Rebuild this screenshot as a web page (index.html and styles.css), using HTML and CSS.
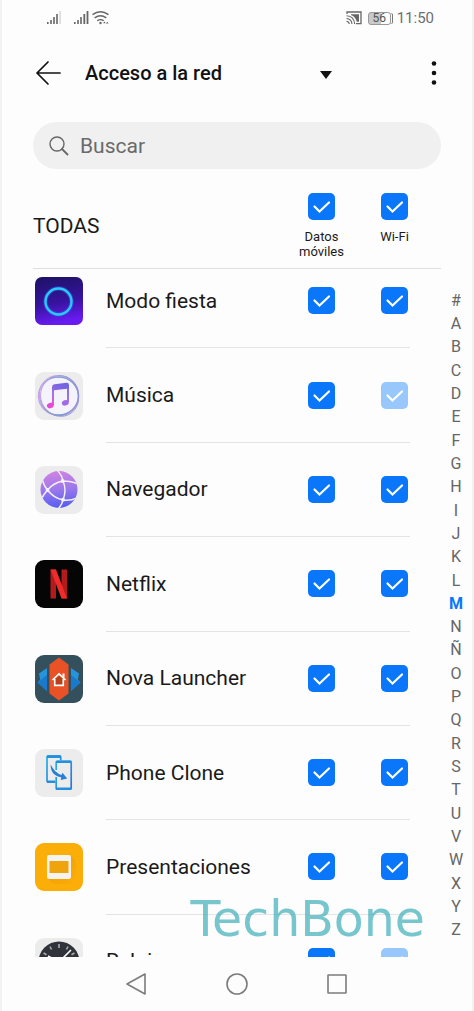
FILE: index.html
```html
<!DOCTYPE html>
<html lang="es">
<head>
<meta charset="utf-8">
<meta name="viewport" content="width=device-width, initial-scale=1">
<title>Acceso a la red</title>
<link rel="stylesheet" href="styles.css">
</head>
<body>
<div class="app">
  <div class="status">
    <div class="status-left">
      <svg width="15" height="14" viewBox="0 0 15 14" fill="#666"><rect x="0" y="11" width="1.6" height="2"/><rect x="3.2" y="9" width="1.6" height="4"/><rect x="6.2" y="6" width="1.6" height="7"/><rect x="9.2" y="3" width="1.6" height="10"/><rect x="12.4" y="0" width="1.4" height="13" fill="#d5d5d5"/></svg>
      <svg width="36" height="14" viewBox="0 0 36 14" fill="#666"><rect x="0" y="11" width="1.6" height="2"/><rect x="3.2" y="9" width="1.6" height="4"/><rect x="6.2" y="6" width="1.6" height="7"/><rect x="9.4" y="3" width="1.8" height="10"/><rect x="12.6" y="0" width="1.8" height="13"/><g fill="none" stroke="#666" stroke-width="1.4"><path d="M18.5 3.6Q26.5-2 34.5 3.6M20.7 6.8q5.8-4 11.6 0M23.2 9.8q3.3-2.4 6.6 0"/></g><circle cx="26.5" cy="12" r="1.2"/><path d="M29 12.2l1.6-1.6 1 1.6zM32 12.6l2.6-.2-1.3-1.6z"/></svg>
    </div>
    <div class="status-right">
      <svg width="16" height="14" viewBox="0 0 16 14"><path d="M1 3V1h14v11.600H10" fill="none" stroke="#666" stroke-width="1.300"/><path d="M5 3.300h8v7.500h-2.200Q9.500 5.500 5 4z" fill="#666"/><g fill="none" stroke="#666" stroke-width="1.100"><path d="M.5 4.700Q8 5 8.700 13M.5 7.500Q5.500 8 6 13M.5 10.300Q3 10.600 3.300 13"/></g></svg>
      <div class="battery"><span>56</span></div>
      <time>11:50</time>
    </div>
  </div>

  <header class="bar">
    <button class="icon-btn" aria-label="Atrás"><svg width="26" height="26" viewBox="0 0 26 26" fill="none" stroke="#111" stroke-width="1.700" stroke-linecap="round" stroke-linejoin="round"><path d="M25 13H2M13 2 2 13 13 24"/></svg></button>
    <select class="picker" aria-label="Sección"><option>Acceso a la red</option></select>
    <button class="icon-btn more" aria-label="Más opciones"><svg width="6" height="24" viewBox="0 0 6 24" fill="#111"><circle cx="3" cy="2.500" r="2.300"/><circle cx="3" cy="12" r="2.300"/><circle cx="3" cy="21.500" r="2.300"/></svg></button>
  </header>

  <div class="search">
    <svg width="20" height="20" viewBox="0 0 20 20" fill="none" stroke="#666" stroke-width="1.400" stroke-linecap="round"><circle cx="8" cy="8" r="7"/><path d="M13 13l5.500 5.500" stroke-width="1.800"/></svg>
    <input type="search" placeholder="Buscar" aria-label="Buscar">
  </div>

  <div class="all">
    <h2>TODAS</h2>
    <label class="all-col"><input class="check" type="checkbox" checked><span>Datos<br>móviles</span></label>
    <label class="all-col"><input class="check" type="checkbox" checked><span>Wi-Fi</span></label>
  </div>

  <main class="main">
    <div class="viewport">
    <ul class="list">
      <li class="row">
        <svg class="logo" viewBox="0 0 48 48"><defs><linearGradient id="party" x2=".2" y2="1"><stop stop-color="#1c1263"/><stop offset=".6" stop-color="#37139f"/><stop offset="1" stop-color="#671bf0"/></linearGradient></defs><rect width="48" height="48" rx="7" fill="url(#party)"/><circle cx="23.500" cy="24.500" r="13" fill="none" stroke="#315cf0" stroke-opacity=".5" stroke-width="4.500"/><circle cx="23.500" cy="24.500" r="13" fill="none" stroke="#2bc9fc" stroke-width="2.400"/></svg>
        <div class="body"><label for="fiesta">Modo fiesta</label><input class="check" id="fiesta" type="checkbox" checked><input class="check" type="checkbox" checked aria-label="Modo fiesta Wi-Fi"></div>
      </li>
      <li class="row">
        <svg class="logo" viewBox="0 0 48 48"><defs><linearGradient id="ring"><stop stop-color="#c9a6e6"/><stop offset=".5" stop-color="#7b9cd0"/><stop offset="1" stop-color="#9a8ed8"/></linearGradient><linearGradient id="note" gradientUnits="userSpaceOnUse" x1="30" y1="11" x2="14" y2="34"><stop stop-color="#6c66e0"/><stop offset=".5" stop-color="#9567e4"/><stop offset="1" stop-color="#f047d0"/></linearGradient></defs><rect width="48" height="48" rx="9" fill="#ececed"/><circle cx="24" cy="24" r="19" fill="#f4f2fa"/><g fill="none" stroke="url(#ring)"><ellipse cx="23.500" cy="24" rx="20" ry="19" stroke-width="1.500"/><ellipse cx="24.500" cy="23.500" rx="19" ry="20" stroke-width="1.200"/><ellipse cx="24" cy="24" rx="21" ry="19" transform="rotate(55 24 24)" stroke-width=".8"/></g><path d="M18 33V15M33 30V13" fill="none" stroke="url(#note)" stroke-width="1.800"/><path d="M17.100 15q0-2.500 2.400-2.800l12-1.400q2.400-.2 2.400 2.200v3.500l-16.800 2z" fill="url(#note)"/><ellipse cx="15.300" cy="33.500" rx="3.500" ry="2.700" transform="rotate(-18 15.300 33.500)" fill="#e54bd0"/><ellipse cx="30.300" cy="30.800" rx="3.500" ry="2.700" transform="rotate(-18 30.300 30.800)" fill="#a26be6"/></svg>
        <div class="body"><label for="musica">Música</label><input class="check" id="musica" type="checkbox" checked><input class="check" type="checkbox" checked disabled aria-label="Música Wi-Fi"></div>
      </li>
      <li class="row">
        <svg class="logo" viewBox="0 0 48 48"><defs><linearGradient id="globe" x1=".4" x2=".5" y2="1"><stop stop-color="#d183e0"/><stop offset=".5" stop-color="#9b78ec"/><stop offset="1" stop-color="#545df2"/></linearGradient><clipPath id="globe-clip"><circle cx="24" cy="23.500" r="18.500"/></clipPath></defs><rect width="48" height="48" rx="9" fill="#ececed"/><circle cx="24" cy="23.500" r="18.500" fill="url(#globe)"/><g clip-path="url(#globe-clip)" fill="none" stroke="#f4effc" stroke-width="1.500"><path d="M22 4q5 5 6 11 4 9 0 19-1 5-5 9M28 15Q18 17 12.500 24 8 29 6 34M28 15q9 0 15 3M7 13q2 7 5.500 11 6 8 15.500 10 7 1 14-2"/></g><g fill="#f7f3fe"><circle cx="27.700" cy="15" r="1.900"/><circle cx="12.500" cy="24" r="1.900"/><circle cx="28" cy="33.700" r="1.900"/></g></svg>
        <div class="body"><label for="navegador">Navegador</label><input class="check" id="navegador" type="checkbox" checked><input class="check" type="checkbox" checked aria-label="Navegador Wi-Fi"></div>
      </li>
      <li class="row">
        <svg class="logo" viewBox="0 0 48 48"><rect width="48" height="48" rx="9" fill="#050505"/><rect x="15.500" y="9.500" width="5.500" height="29" fill="#b21a1c"/><rect x="26.500" y="9.500" width="5.500" height="29" fill="#b21a1c"/><polygon points="15.500,9.500 21,9.500 32,38.500 26.500,38.500" fill="#ee2c2c"/></svg>
        <div class="body"><label for="netflix">Netflix</label><input class="check" id="netflix" type="checkbox" checked><input class="check" type="checkbox" checked aria-label="Netflix Wi-Fi"></div>
      </li>
      <li class="row">
        <svg class="logo" viewBox="0 0 48 48"><rect width="48" height="48" rx="9" fill="#35505d"/><path d="M4 18.500 12 13v23L2.500 27.500l2.700-3z" fill="#2495dc"/><path d="M2.500 27.500 12 20v16z" fill="#1979cc"/><path d="M44 18.500 36 13v23l9.500-8.500-2.700-3z" fill="#2495dc"/><path d="M45.500 27.500 36 20v16z" fill="#1979cc"/><path d="M24 2.500 33.500 9.500v29L24 45.500l-9.500-7V9.500z" fill="#e95226"/><path d="M18.500 25.500v5h11v-5L24 20.500z" fill="#ba401d"/><path d="M17.500 25 24 19l6.500 6M19.700 24v6.300h8.600V24" fill="none" stroke="#fff" stroke-width="1.700"/><path d="M27.500 18.500h2v4.500l-2-2z" fill="#fff"/></svg>
        <div class="body"><label for="nova">Nova Launcher</label><input class="check" id="nova" type="checkbox" checked><input class="check" type="checkbox" checked aria-label="Nova Launcher Wi-Fi"></div>
      </li>
      <li class="row">
        <svg class="logo" viewBox="0 0 48 48"><defs><linearGradient id="phones" x2="1" y2="1"><stop stop-color="#22b0e8"/><stop offset="1" stop-color="#3272d4"/></linearGradient></defs><rect width="48" height="48" rx="9" fill="#ececed"/><g fill="none" stroke="url(#phones)" stroke-width="1.700"><path d="M20.500 33.200H13q-1-.2-1-1.400V8q0-1 1-1.200h11.500q1.200 0 1.200 1.200v3.500"/><path d="M21.200 21v-7.800q0-1 1-1.200h13q1 0 1 1.200v26q0 1-1 1h-13q-1 0-1-1V28"/></g><path d="M12 6.500h14v2.500H12zM21 12h15v2H21zM21 38.500h15v2.500H21zM12 31.500h8v2.500h-8z" fill="#258fdd"/><path d="M15.700 15.500q-.5 11 10.500 12.700l-.5 2.800 6.500-1.500-4.700-5.800-.8 2.200q-7-1.700-11-10.400z" fill="#287fd8"/></svg>
        <div class="body"><label for="clone">Phone Clone</label><input class="check" id="clone" type="checkbox" checked><input class="check" type="checkbox" checked aria-label="Phone Clone Wi-Fi"></div>
      </li>
      <li class="row">
        <svg class="logo" viewBox="0 0 48 48"><defs><linearGradient id="shade" x2="1" y2="1"><stop stop-color="#ee9c06"/><stop offset="1" stop-color="#fbad08"/></linearGradient></defs><rect width="48" height="48" rx="9" fill="#fbad08"/><path d="M36 13l5 5v13q0 10-9 10H18L12 35z" fill="url(#shade)"/><rect x="12" y="12" width="24" height="24" rx="2" fill="#f5f3ef"/><rect x="14.500" y="18" width="19" height="12" fill="#efa30d"/></svg>
        <div class="body"><label for="presentaciones">Presentaciones</label><input class="check" id="presentaciones" type="checkbox" checked><input class="check" type="checkbox" checked aria-label="Presentaciones Wi-Fi"></div>
      </li>
      <li class="row">
        <svg class="logo" viewBox="0 0 48 48"><rect width="48" height="48" rx="9" fill="#ececed"/><circle cx="24" cy="24" r="20.500" fill="#30333a"/><g stroke="#a9abae" stroke-width="1.600"><path d="M24 6v4M15 8.500l1.500 3M33 8.500l-1.500 3M8.500 15l3 1.800M39.500 15l-3 1.800"/></g><path d="M24 24 36 12M24 24l-11-6" stroke="#fff" stroke-width="1.600"/></svg>
        <div class="body"><label for="reloj">Reloj</label><input class="check" id="reloj" type="checkbox" checked><input class="check" type="checkbox" checked disabled aria-label="Reloj Wi-Fi"></div>
      </li>
    </ul>
    </div>
    <nav class="index" aria-label="Índice alfabético">
      <a href="#">#</a><a href="#">A</a><a href="#">B</a><a href="#">C</a><a href="#">D</a><a href="#">E</a><a href="#">F</a><a href="#">G</a><a href="#">H</a><a href="#">I</a><a href="#">J</a><a href="#">K</a><a href="#">L</a><a href="#" class="current">M</a><a href="#">N</a><a href="#">Ñ</a><a href="#">O</a><a href="#">P</a><a href="#">Q</a><a href="#">R</a><a href="#">S</a><a href="#">T</a><a href="#">U</a><a href="#">V</a><a href="#">W</a><a href="#">X</a><a href="#">Y</a><a href="#">Z</a>
    </nav>
    <div class="watermark">TechBone</div>
  </main>

  <footer class="system">
    <button class="icon-btn" aria-label="Volver"><svg width="24" height="24" viewBox="0 0 24 24" fill="none" stroke="#7c7c7c" stroke-width="1.600" stroke-linejoin="round"><path d="M20 2v20L2 12z"/></svg></button>
    <button class="icon-btn" aria-label="Inicio"><svg width="24" height="24" viewBox="0 0 24 24" fill="none" stroke="#7c7c7c" stroke-width="1.600"><circle cx="12" cy="12" r="10"/></svg></button>
    <button class="icon-btn" aria-label="Recientes"><svg width="24" height="24" viewBox="0 0 24 24" fill="none" stroke="#7c7c7c" stroke-width="1.600"><rect x="3" y="3" width="18" height="18" rx=".5"/></svg></button>
  </footer>
</div>
</body>
</html>
```
FILE: styles.css
```css
* {
  box-sizing: border-box;
}

body {
  margin: 0;
  font-family: Roboto, "Noto Sans", sans-serif;
  color: #1a1a1a;
  background: #fff;
}

svg {
  display: block;
  flex: none;
}

.app {
  display: flex;
  flex-direction: column;
  height: 100vh;
  border: solid #f2f2f2;
  border-width: 0 2px;
  background: #fdfdfd;
}

.status {
  display: flex;
  justify-content: space-between;
  align-items: center;
  height: 36px;
  padding: 0 38px 0 45px;
  color: #6e6e6e;
  font-size: 15px;
}

.status-left {
  display: flex;
  gap: 12px;
}

.status-right {
  display: flex;
  align-items: center;
  gap: 6px;
}

.battery {
  display: flex;
  align-items: center;
  justify-content: center;
  width: 23px;
  height: 13px;
  border: 1px solid #999;
  border-radius: 3px;
  background: linear-gradient(90deg, #c9c9c9 56%, #fdfdfd 56%);
  box-shadow: 2px 0 0 -1px #fdfdfd, 3px 0 0 -1px #777;
  color: #555;
  font-size: 12px;
  line-height: 12px;
}

.icon-btn {
  padding: 0;
  border: 0;
  background: none;
}

.bar {
  display: flex;
  align-items: center;
  height: 73px;
  padding: 0 35px 0 33px;
}

.picker {
  width: 248px;
  margin: 0 auto 0 24px;
  padding: 0;
  border: 0;
  appearance: none;
  background: url("data:image/svg+xml,%3Csvg xmlns='http://www.w3.org/2000/svg' width='12' height='8'%3E%3Cpath d='M0 0h12L6 8z' fill='%23111'/%3E%3C/svg%3E") no-repeat right 1px top 10px;
  color: #111;
  font: 500 20px/24px Roboto, sans-serif;
}

.search {
  display: flex;
  align-items: center;
  gap: 11px;
  height: 47px;
  margin: 13px 31px 0;
  padding: 0 16px;
  border-radius: 24px;
  background: #f0f0f0;
}

.search input {
  flex: 1;
  min-width: 0;
  padding: 0;
  border: 0;
  outline: 0;
  background: none;
  font: 21px/24px Roboto, sans-serif;
}

.search input::placeholder {
  color: #6a6a6a;
}

.all {
  display: flex;
  height: 100px;
  margin: 0 31px;
  padding: 24px 10px 0 0;
  border-bottom: 1px solid #dedede;
}

.all h2 {
  flex: 1;
  margin: 20px 0 0;
  font-size: 21px;
  font-weight: 400;
  line-height: 26px;
}

.all-col {
  display: flex;
  flex-direction: column;
  align-items: center;
  gap: 9px;
  width: 73px;
  font-size: 13px;
  line-height: 15px;
  text-align: center;
}

.check {
  flex: none;
  width: 27px;
  height: 27px;
  margin: 0;
  appearance: none;
  border-radius: 5px;
  background: #0a77fb url("data:image/svg+xml,%3Csvg xmlns='http://www.w3.org/2000/svg' viewBox='0 0 27 27'%3E%3Cpath d='M6.500 13.500l5 5 9.500-9' fill='none' stroke='white' stroke-width='2.200' stroke-linecap='round'/%3E%3C/svg%3E");
}

.check:disabled {
  background-color: #98c7fb;
}

.main {
  position: relative;
  display: flex;
  flex: 1;
  min-height: 0;
}

.viewport {
  flex: 1;
  overflow: hidden;
}

.list {
  display: grid;
  grid-template-rows: repeat(8, 1fr);
  height: 755px;
  margin: -15px 0 0;
  padding: 0 0 0 33px;
  list-style: none;
}

.row {
  display: flex;
  align-items: center;
  gap: 23px;
}

.logo {
  width: 48px;
  height: 48px;
}

.body {
  display: flex;
  flex: 1;
  align-items: center;
  align-self: stretch;
  gap: 46px;
  padding-right: 2px;
  border-bottom: 1px solid #e4e4e4;
  font-size: 21px;
}

.body label {
  flex: 1;
}

.index {
  display: grid;
  grid-template-rows: repeat(28, 1fr);
  width: 30px;
  height: 653px;
  margin: 20px 1px 0 31px;
  font-size: 16px;
  text-align: center;
}

.index a {
  display: flex;
  align-items: center;
  justify-content: center;
  color: #666;
  line-height: 20px;
  text-decoration: none;
}

.index .current {
  color: #0a77fb;
  font-weight: 700;
}

.watermark {
  position: absolute;
  right: 47px;
  bottom: 9px;
  color: #38adb8;
  font: 49px/56px "DejaVu Sans", sans-serif;
  opacity: .68;
  pointer-events: none;
}

.system {
  display: flex;
  align-items: center;
  justify-content: center;
  gap: 76px;
  height: 54px;
}
```
